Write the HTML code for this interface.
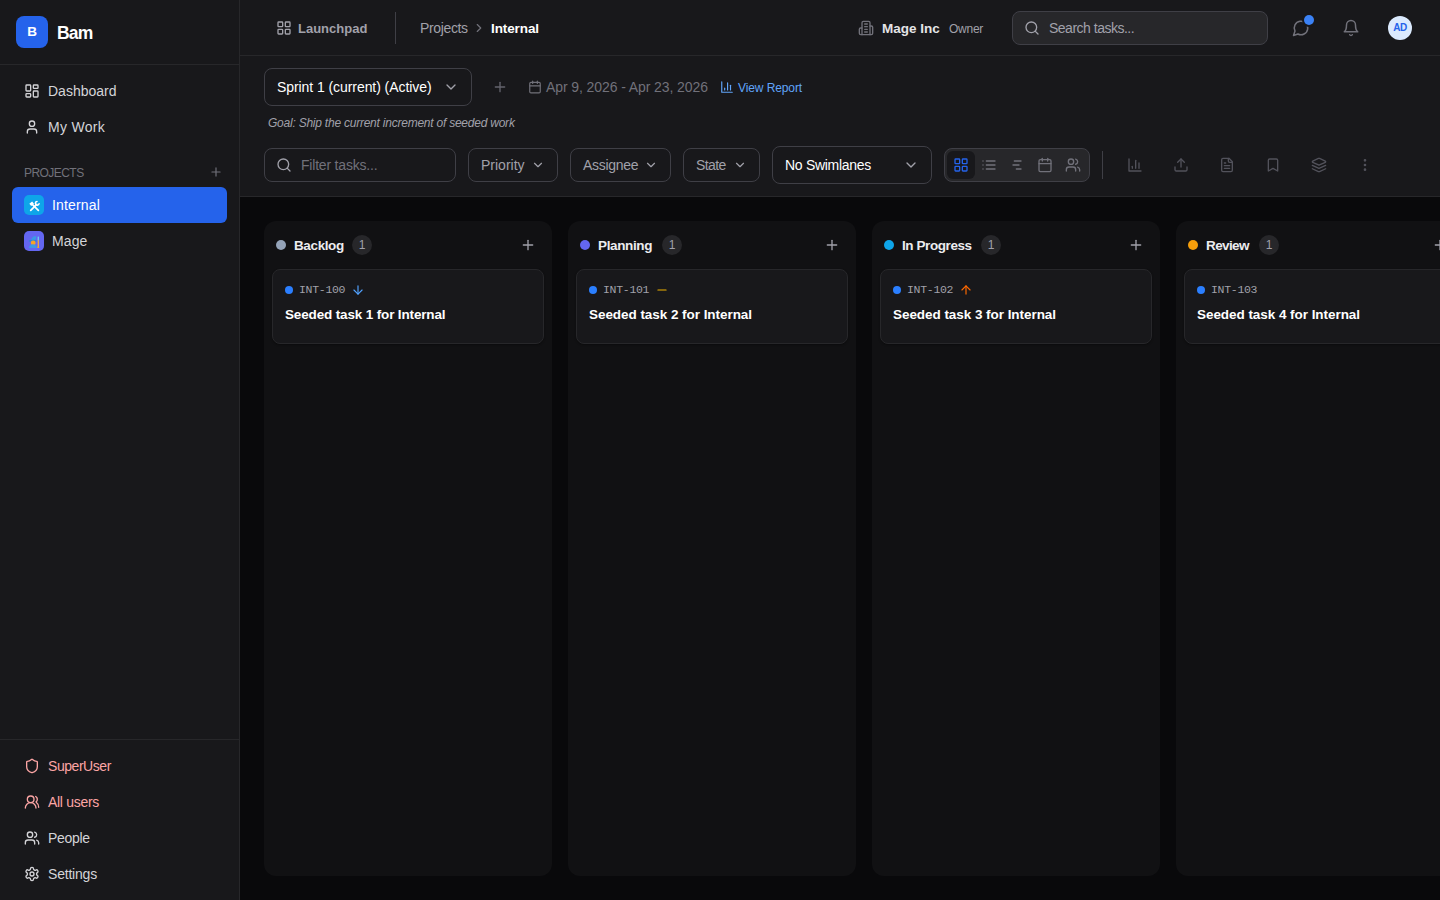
<!DOCTYPE html>
<html lang="en">
<head>
<meta charset="utf-8">
<title>Bam - Internal</title>
<style>
*{box-sizing:border-box;margin:0;padding:0}
html,body{width:1440px;height:900px;overflow:hidden;background:#09090b}
body{font-family:"Liberation Sans",sans-serif;font-size:14px;color:#f4f4f5;position:relative}
svg{display:block;fill:none;stroke:currentColor;stroke-width:2;stroke-linecap:round;stroke-linejoin:round}
.abs{position:absolute}
.t{position:absolute;white-space:nowrap;line-height:20px;height:20px}
.b{font-weight:bold}
/* sidebar */
#sidebar{position:absolute;left:0;top:0;width:240px;height:900px;background:#18181b;border-right:1px solid #27272a}
#sb-head{position:absolute;left:0;top:0;width:239px;height:65px;border-bottom:1px solid #27272a}
#logo{position:absolute;left:16px;top:16px;width:32px;height:32px;border-radius:8px;background:#2563eb;color:#fff;font-weight:bold;font-size:13.500px;line-height:32px;text-align:center;transform-origin:center}
.nav{color:#d4d4d8}
.nav svg,.ic{position:absolute;width:16px;height:16px}
.red{color:#fca5a5}
#proj-active{position:absolute;left:12px;top:187px;width:215px;height:36px;border-radius:6px;background:#2563eb}
.pico{position:absolute;width:20px;height:20px;border-radius:5px;left:24px}
#sb-foot{position:absolute;left:0;top:739px;width:239px;height:1px;background:#27272a}
/* header */
#top{position:absolute;left:240px;top:0;width:1200px;height:56px;background:#18181b;border-bottom:1px solid #27272a}
#sub{position:absolute;left:240px;top:56px;width:1200px;height:141px;background:#18181b;border-bottom:1px solid #27272a}
.box{position:absolute;border:1px solid #3f3f46;border-radius:8px;background:#18181b}
.muted{color:#a1a1aa}
.dim{color:#71717a}
/* board */
.col{position:absolute;top:221px;width:288px;height:655px;border-radius:12px;background:#111113}
.card{position:absolute;left:8px;top:48px;width:272px;height:75px;border-radius:8px;background:#18181b;border:1px solid #27272a;box-shadow:0 1px 2px rgba(0,0,0,.35)}
.dot{position:absolute;border-radius:50%}
.cnt{position:absolute;top:14px;width:20px;height:20px;border-radius:10px;background:#27272a;color:#a1a1aa;font-size:12px;line-height:20px;text-align:center}
.mono{font-family:"Liberation Mono",monospace;font-size:11.5px;letter-spacing:-0.3px;color:#a1a1aa}
</style>
</head>
<body>

<!-- ============ SIDEBAR ============ -->
<div id="sidebar">
  <div id="sb-head">
    <div id="logo">B</div>
    <div class="t b" style="left:57px;top:21px;font-size:17.5px;line-height:24px;height:24px;color:#fff;letter-spacing:-0.8px">Bam</div>
  </div>

  <div class="nav">
    <svg style="left:24px;top:83px" viewBox="0 0 24 24"><rect width="7" height="9" x="3" y="3" rx="1"/><rect width="7" height="5" x="14" y="3" rx="1"/><rect width="7" height="9" x="14" y="12" rx="1"/><rect width="7" height="5" x="3" y="16" rx="1"/></svg>
    <div class="t" style="left:48px;top:81px">Dashboard</div>
    <svg style="left:24px;top:119px" viewBox="0 0 24 24"><path d="M19 21v-2a4 4 0 0 0-4-4H9a4 4 0 0 0-4 4v2"/><circle cx="12" cy="7" r="4"/></svg>
    <div class="t" style="left:48px;top:117px;letter-spacing:0.3px">My Work</div>
  </div>

  <div class="t dim" style="left:24px;top:163px;font-size:12px;letter-spacing:-0.55px">PROJECTS</div>
  <svg class="ic dim" style="left:209px;top:165px;width:14px;height:14px" viewBox="0 0 24 24"><path d="M5 12h14"/><path d="M12 5v14"/></svg>

  <div id="proj-active"></div>
  <div class="pico" style="top:195px;background:#0ea5e9">
    <svg viewBox="0 0 20 20" style="width:20px;height:20px;stroke:#fff"><g transform="translate(10.500 11.400) scale(.9) translate(-10.500 -11.200)"><path d="M6.300 15.700 13 9" stroke-width="1.900"/><path d="M14.800 15.700 8.300 9.200" stroke-width="1.900"/><path d="M5.800 9.600 8.900 7" stroke-width="3.200" stroke-linecap="butt"/><path d="M15.600 8.200a2.100 2.100 0 1 1-2.300-2.500" stroke-width="1.700"/></g></svg>
  </div>
  <div class="t" style="left:52px;top:195px;color:#fff;letter-spacing:0.15px">Internal</div>

  <div class="pico" style="top:231px;background:#6366f1">
    <svg viewBox="0 0 20 20" style="width:20px;height:20px;stroke:none"><path d="M6.500 9 9.300 5.600 12.400 5 11.600 9z" fill="#3b9ae6"/><path d="M4.600 9.800c1.500-1.300 6.800-1.300 8.400 0l-.400 1c-2-.900-5.600-.900-7.600 0z" fill="#2f86d6"/><circle cx="9.200" cy="11.900" r="2.400" fill="#f7a325"/><path d="M5 17c.300-2.600 1.600-3.700 4-3.700s3.700 1.100 4 3.700z" fill="#3b9ae6"/><rect x="13.700" y="8.500" width="1.200" height="8.500" fill="#f2b13a"/><rect x="13.600" y="5.600" width="1.400" height="3.600" rx=".5" fill="#6cc7f5"/><rect x="13.400" y="15.600" width="1.800" height="1.400" rx=".4" fill="#f5a623"/></svg>
  </div>
  <div class="t" style="left:52px;top:231px;color:#d4d4d8;letter-spacing:0.1px">Mage</div>

  <div id="sb-foot"></div>
  <div class="nav">
    <svg class="red" style="left:24px;top:758px" viewBox="0 0 24 24"><path d="M20 13c0 5-3.500 7.500-7.660 8.950a1 1 0 0 1-.670-.010C7.500 20.500 4 18 4 13V6a1 1 0 0 1 1-1c2 0 4.500-1.200 6.240-2.720a1.170 1.170 0 0 1 1.520 0C14.510 3.810 17 5 19 5a1 1 0 0 1 1 1z"/></svg>
    <div class="t red" style="left:48px;top:756px;letter-spacing:-0.45px">SuperUser</div>
    <svg class="red" style="left:24px;top:794px" viewBox="0 0 24 24"><path d="M18 21a8 8 0 0 0-16 0"/><circle cx="10" cy="8" r="5"/><path d="M22 20c0-3.370-2-6.500-4-8a5 5 0 0 0-.450-8.300"/></svg>
    <div class="t red" style="left:48px;top:792px;letter-spacing:-0.3px">All users</div>
    <svg style="left:24px;top:830px" viewBox="0 0 24 24"><path d="M16 21v-2a4 4 0 0 0-4-4H6a4 4 0 0 0-4 4v2"/><circle cx="9" cy="7" r="4"/><path d="M22 21v-2a4 4 0 0 0-3-3.870"/><path d="M16 3.130a4 4 0 0 1 0 7.750"/></svg>
    <div class="t" style="left:48px;top:828px;letter-spacing:-0.3px">People</div>
    <svg style="left:24px;top:866px" viewBox="0 0 24 24"><path d="M12.220 2h-.440a2 2 0 0 0-2 2v.180a2 2 0 0 1-1 1.730l-.430.250a2 2 0 0 1-2 0l-.150-.080a2 2 0 0 0-2.730.730l-.220.380a2 2 0 0 0 .730 2.730l.150.100a2 2 0 0 1 1 1.720v.510a2 2 0 0 1-1 1.740l-.150.090a2 2 0 0 0-.730 2.730l.220.380a2 2 0 0 0 2.730.730l.150-.080a2 2 0 0 1 2 0l.430.250a2 2 0 0 1 1 1.730V20a2 2 0 0 0 2 2h.440a2 2 0 0 0 2-2v-.180a2 2 0 0 1 1-1.730l.430-.250a2 2 0 0 1 2 0l.150.080a2 2 0 0 0 2.730-.730l.220-.390a2 2 0 0 0-.730-2.730l-.150-.080a2 2 0 0 1-1-1.740v-.500a2 2 0 0 1 1-1.740l.150-.090a2 2 0 0 0 .730-2.730l-.220-.380a2 2 0 0 0-2.730-.730l-.150.080a2 2 0 0 1-2 0l-.430-.250a2 2 0 0 1-1-1.730V4a2 2 0 0 0-2-2z"/><circle cx="12" cy="12" r="3"/></svg>
    <div class="t" style="left:48px;top:864px;letter-spacing:-0.2px">Settings</div>
  </div>
</div>

<!-- ============ TOP BAR ============ -->
<div id="top">
  <svg class="ic muted" style="left:36px;top:20px" viewBox="0 0 24 24"><rect width="7" height="7" x="3" y="3" rx="1"/><rect width="7" height="7" x="14" y="3" rx="1"/><rect width="7" height="7" x="14" y="14" rx="1"/><rect width="7" height="7" x="3" y="14" rx="1"/></svg>
  <div class="t b muted" style="left:58px;top:19px;font-size:13px;letter-spacing:0px">Launchpad</div>
  <div class="abs" style="left:155px;top:12px;width:1px;height:32px;background:#3f3f46"></div>
  <div class="t muted" style="left:180px;top:18px;letter-spacing:-0.35px">Projects</div>
  <svg class="ic dim" style="left:232px;top:21px;width:14px;height:14px" viewBox="0 0 24 24"><path d="m9 18 6-6-6-6"/></svg>
  <div class="t b" style="left:251px;top:19px;color:#fff;font-size:13.5px;letter-spacing:-0.1px">Internal</div>

  <svg class="ic dim" style="left:618px;top:20px" viewBox="0 0 24 24"><path d="M6 22V4a2 2 0 0 1 2-2h8a2 2 0 0 1 2 2v18Z"/><path d="M6 12H4a2 2 0 0 0-2 2v6a2 2 0 0 0 2 2h2"/><path d="M18 9h2a2 2 0 0 1 2 2v9a2 2 0 0 1-2 2h-2"/><path d="M10 6h4"/><path d="M10 10h4"/><path d="M10 14h4"/><path d="M10 18h4"/></svg>
  <div class="t b" style="left:642px;top:19px;color:#e4e4e7;font-size:13.5px;letter-spacing:0px">Mage Inc</div>
  <div class="t muted" style="left:709px;top:19px;font-size:12px;letter-spacing:-0.25px">Owner</div>

  <div class="box" style="left:772px;top:11px;width:256px;height:34px;background:#27272a"></div>
  <svg class="ic muted" style="left:784px;top:20px" viewBox="0 0 24 24"><circle cx="11" cy="11" r="8"/><path d="m21 21-4.300-4.300"/></svg>
  <div class="t muted" style="left:809px;top:18px;letter-spacing:-0.5px">Search tasks...</div>

  <svg class="ic dim" style="left:1052px;top:19px;width:18px;height:18px" viewBox="0 0 24 24"><path d="M7.900 20A9 9 0 1 0 4 16.100L2 22Z"/></svg>
  <div class="dot" style="left:1064px;top:15px;width:10px;height:10px;background:#3b82f6;box-shadow:0 0 0 2px #18181b"></div>
  <svg class="ic dim" style="left:1102px;top:19px;width:18px;height:18px" viewBox="0 0 24 24"><path d="M6 8a6 6 0 0 1 12 0c0 7 3 9 3 9H3s3-2 3-9"/><path d="M10.300 21a1.940 1.940 0 0 0 3.400 0"/></svg>
  <div class="abs b" style="left:1148px;top:16px;width:24px;height:24px;border-radius:12px;background:#dbeafe;color:#2563eb;font-size:10px;letter-spacing:-0.4px;line-height:24px;text-align:center">AD</div>
</div>

<!-- ============ SUB HEADER ============ -->
<div id="sub">
  <div class="box" style="left:24px;top:12px;width:208px;height:38px"></div>
  <div class="t" style="left:37px;top:21px;color:#fff;letter-spacing:-0.07px">Sprint 1 (current) (Active)</div>
  <svg class="ic muted" style="left:203px;top:23px" viewBox="0 0 24 24"><path d="m6 9 6 6 6-6"/></svg>
  <svg class="ic" style="left:252px;top:23px;color:#63636d" viewBox="0 0 24 24"><path d="M5 12h14"/><path d="M12 5v14"/></svg>
  <svg class="ic dim" style="left:288px;top:24px;width:14px;height:14px" viewBox="0 0 24 24"><path d="M8 2v4"/><path d="M16 2v4"/><rect width="18" height="18" x="3" y="4" rx="2"/><path d="M3 10h18"/></svg>
  <div class="t dim" style="left:306px;top:21px;letter-spacing:-0.09px">Apr 9, 2026 - Apr 23, 2026</div>
  <svg class="ic" style="left:480px;top:24px;width:14px;height:14px;color:#60a5fa" viewBox="0 0 24 24"><path d="M3 3v18h18"/><path d="M18 17V9"/><path d="M13 17V5"/><path d="M8 17v-3"/></svg>
  <div class="t" style="left:498px;top:22px;font-size:12px;color:#60a5fa;letter-spacing:-0.1px">View Report</div>
  <div class="t muted" style="left:28px;top:57px;font-size:12px;font-style:italic;letter-spacing:-0.23px">Goal: Ship the current increment of seeded work</div>

  <div class="box" style="left:24px;top:92px;width:192px;height:34px"></div>
  <svg class="ic muted" style="left:36px;top:101px" viewBox="0 0 24 24"><circle cx="11" cy="11" r="8"/><path d="m21 21-4.300-4.300"/></svg>
  <div class="t dim" style="left:61px;top:99px;letter-spacing:-0.2px">Filter tasks...</div>

  <div class="box" style="left:228px;top:92px;width:90px;height:34px"></div>
  <div class="t muted" style="left:241px;top:99px">Priority</div>
  <svg class="ic muted" style="left:291px;top:102px;width:14px;height:14px" viewBox="0 0 24 24"><path d="m6 9 6 6 6-6"/></svg>

  <div class="box" style="left:330px;top:92px;width:101px;height:34px"></div>
  <div class="t muted" style="left:343px;top:99px;letter-spacing:-0.3px">Assignee</div>
  <svg class="ic muted" style="left:404px;top:102px;width:14px;height:14px" viewBox="0 0 24 24"><path d="m6 9 6 6 6-6"/></svg>

  <div class="box" style="left:443px;top:92px;width:77px;height:34px"></div>
  <div class="t muted" style="left:456px;top:99px;letter-spacing:-0.6px">State</div>
  <svg class="ic muted" style="left:493px;top:102px;width:14px;height:14px" viewBox="0 0 24 24"><path d="m6 9 6 6 6-6"/></svg>

  <div class="box" style="left:532px;top:90px;width:160px;height:38px"></div>
  <div class="t" style="left:545px;top:99px;color:#fff;letter-spacing:-0.3px">No Swimlanes</div>
  <svg class="ic muted" style="left:663px;top:101px" viewBox="0 0 24 24"><path d="m6 9 6 6 6-6"/></svg>

  <div class="box" style="left:704px;top:92px;width:146px;height:34px;background:#27272a"></div>
  <div class="abs" style="left:707px;top:95px;width:28px;height:28px;border-radius:6px;background:#18181b"></div>
  <svg class="ic" style="left:713px;top:101px;color:#2563eb" viewBox="0 0 24 24"><rect width="7" height="7" x="3" y="3" rx="1"/><rect width="7" height="7" x="14" y="3" rx="1"/><rect width="7" height="7" x="14" y="14" rx="1"/><rect width="7" height="7" x="3" y="14" rx="1"/></svg>
  <svg class="ic dim" style="left:741px;top:101px" viewBox="0 0 24 24"><path d="M8 6h13"/><path d="M8 12h13"/><path d="M8 18h13"/><path d="M3 6h.010"/><path d="M3 12h.010"/><path d="M3 18h.010"/></svg>
  <svg class="ic dim" style="left:769px;top:101px" viewBox="0 0 24 24"><path d="M8 6h10"/><path d="M6 12h9"/><path d="M11 18h7"/></svg>
  <svg class="ic dim" style="left:797px;top:101px" viewBox="0 0 24 24"><path d="M8 2v4"/><path d="M16 2v4"/><rect width="18" height="18" x="3" y="4" rx="2"/><path d="M3 10h18"/></svg>
  <svg class="ic dim" style="left:825px;top:101px" viewBox="0 0 24 24"><path d="M16 21v-2a4 4 0 0 0-4-4H6a4 4 0 0 0-4 4v2"/><circle cx="9" cy="7" r="4"/><path d="M22 21v-2a4 4 0 0 0-3-3.870"/><path d="M16 3.130a4 4 0 0 1 0 7.750"/></svg>

  <div class="abs" style="left:862px;top:95px;width:1px;height:28px;background:#3f3f46"></div>

  <svg class="ic" style="left:887px;top:101px;color:#52525b" viewBox="0 0 24 24"><path d="M3 3v18h18"/><path d="M18 17V9"/><path d="M13 17V5"/><path d="M8 17v-3"/></svg>
  <svg class="ic" style="left:933px;top:101px;color:#52525b" viewBox="0 0 24 24"><path d="M21 15v4a2 2 0 0 1-2 2H5a2 2 0 0 1-2-2v-4"/><path d="m17 8-5-5-5 5"/><path d="M12 3v12"/></svg>
  <svg class="ic" style="left:979px;top:101px;color:#52525b" viewBox="0 0 24 24"><path d="M15 2H6a2 2 0 0 0-2 2v16a2 2 0 0 0 2 2h12a2 2 0 0 0 2-2V7Z"/><path d="M14 2v4a2 2 0 0 0 2 2h4"/><path d="M10 9H8"/><path d="M16 13H8"/><path d="M16 17H8"/></svg>
  <svg class="ic" style="left:1025px;top:101px;color:#52525b" viewBox="0 0 24 24"><path d="m19 21-7-4-7 4V5a2 2 0 0 1 2-2h10a2 2 0 0 1 2 2v16z"/></svg>
  <svg class="ic" style="left:1071px;top:101px;color:#52525b" viewBox="0 0 24 24"><path d="m12.830 2.180a2 2 0 0 0-1.660 0L2.600 6.080a1 1 0 0 0 0 1.830l8.580 3.910a2 2 0 0 0 1.660 0l8.580-3.900a1 1 0 0 0 0-1.830Z"/><path d="m22 17.650-9.170 4.160a2 2 0 0 1-1.660 0L2 17.650"/><path d="m22 12.650-9.170 4.160a2 2 0 0 1-1.660 0L2 12.650"/></svg>
  <svg class="ic" style="left:1117px;top:101px;color:#52525b" viewBox="0 0 24 24"><circle cx="12" cy="12" r="1"/><circle cx="12" cy="5" r="1"/><circle cx="12" cy="19" r="1"/></svg>
</div>

<!-- ============ BOARD ============ -->
<div class="col" style="left:264px">
  <div class="dot" style="left:12px;top:19px;width:10px;height:10px;background:#94a3b8"></div>
  <div class="t b" style="left:30px;top:15px;font-size:13.5px;letter-spacing:-0.38px;color:#ececef">Backlog</div>
  <div class="cnt" style="left:88px">1</div>
  <svg class="ic muted" style="left:256px;top:16px" viewBox="0 0 24 24"><path d="M5 12h14"/><path d="M12 5v14"/></svg>
  <div class="card">
    <div class="dot" style="left:12px;top:16px;width:8px;height:8px;background:#2b7fff"></div>
    <div class="t mono" style="left:26px;top:10px">INT-100</div>
    <svg class="ic" style="left:78px;top:13px;width:14px;height:14px;color:#51a2ff" viewBox="0 0 24 24"><path d="M12 5v14"/><path d="m19 12-7 7-7-7"/></svg>
    <div class="t b" style="left:12px;top:35px;color:#fff;font-size:13.5px;letter-spacing:-0.15px">Seeded task 1 for Internal</div>
  </div>
</div>

<div class="col" style="left:568px">
  <div class="dot" style="left:12px;top:19px;width:10px;height:10px;background:#6366f1"></div>
  <div class="t b" style="left:30px;top:15px;font-size:13.5px;letter-spacing:-0.36px;color:#ececef">Planning</div>
  <div class="cnt" style="left:94px">1</div>
  <svg class="ic muted" style="left:256px;top:16px" viewBox="0 0 24 24"><path d="M5 12h14"/><path d="M12 5v14"/></svg>
  <div class="card">
    <div class="dot" style="left:12px;top:16px;width:8px;height:8px;background:#2b7fff"></div>
    <div class="t mono" style="left:26px;top:10px">INT-101</div>
    <svg class="ic" style="left:78px;top:13px;width:14px;height:14px;color:#f0b100" viewBox="0 0 24 24"><path d="M5 12h14"/></svg>
    <div class="t b" style="left:12px;top:35px;color:#fff;font-size:13.5px;letter-spacing:-0.05px">Seeded task 2 for Internal</div>
  </div>
</div>

<div class="col" style="left:872px">
  <div class="dot" style="left:12px;top:19px;width:10px;height:10px;background:#0ea5e9"></div>
  <div class="t b" style="left:30px;top:15px;font-size:13.5px;letter-spacing:-0.42px;color:#ececef">In Progress</div>
  <div class="cnt" style="left:109px">1</div>
  <svg class="ic muted" style="left:256px;top:16px" viewBox="0 0 24 24"><path d="M5 12h14"/><path d="M12 5v14"/></svg>
  <div class="card">
    <div class="dot" style="left:12px;top:16px;width:8px;height:8px;background:#2b7fff"></div>
    <div class="t mono" style="left:26px;top:10px">INT-102</div>
    <svg class="ic" style="left:78px;top:13px;width:14px;height:14px;color:#ff6900" viewBox="0 0 24 24"><path d="m5 12 7-7 7 7"/><path d="M12 19V5"/></svg>
    <div class="t b" style="left:12px;top:35px;color:#fff;font-size:13.5px;letter-spacing:-0.05px">Seeded task 3 for Internal</div>
  </div>
</div>

<div class="col" style="left:1176px">
  <div class="dot" style="left:12px;top:19px;width:10px;height:10px;background:#f59e0b"></div>
  <div class="t b" style="left:30px;top:15px;font-size:13.5px;letter-spacing:-0.6px;color:#ececef">Review</div>
  <div class="cnt" style="left:83px">1</div>
  <svg class="ic muted" style="left:256px;top:16px" viewBox="0 0 24 24"><path d="M5 12h14"/><path d="M12 5v14"/></svg>
  <div class="card">
    <div class="dot" style="left:12px;top:16px;width:8px;height:8px;background:#2b7fff"></div>
    <div class="t mono" style="left:26px;top:10px">INT-103</div>
    <div class="t b" style="left:12px;top:35px;color:#fff;font-size:13.5px;letter-spacing:-0.05px">Seeded task 4 for Internal</div>
  </div>
</div>

</body>
</html>
